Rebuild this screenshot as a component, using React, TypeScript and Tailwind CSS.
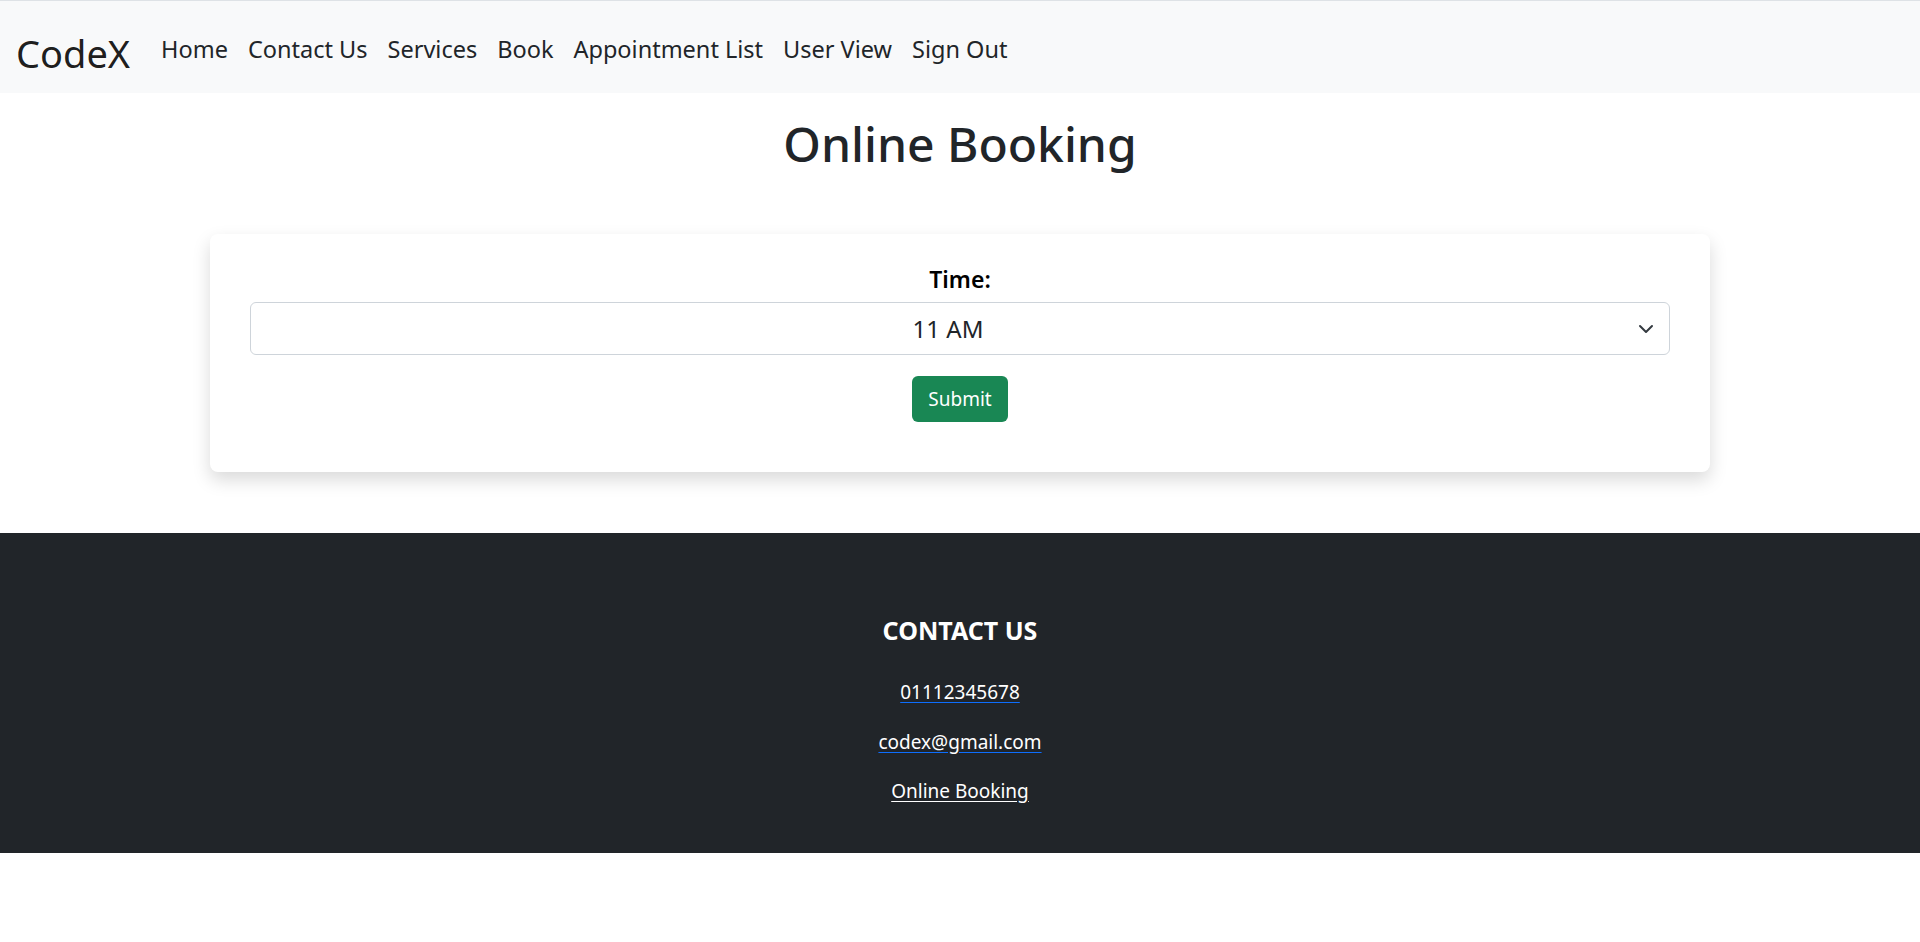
import { useState } from "react";

/* ─── Nav links ──────────────────────────────────────────────────────────── */
const LINKS = ["Home", "Contact Us", "Services", "Book", "Appointment List", "User View", "Sign Out"];

const TIMES = ["9 AM", "10 AM", "11 AM", "12 PM", "1 PM", "2 PM", "3 PM", "4 PM"];

/* ─── Component ──────────────────────────────────────────────────────────── */
export default function App() {
  const [time, setTime] = useState("11 AM");

  return (
    <div className="min-h-screen bg-white font-['Noto_Sans',sans-serif] text-[#212529]">
      {/* ── Navbar ─────────────────────────────────────────────── */}
      <nav className="h-[93px] border-t border-[#dee2e6] bg-[#f8f9fa] flex items-center pl-[16px] pt-[5px]">
        <a href="#" className="text-[38px] leading-none text-black/90 mr-[21px] pt-[6px]">
          CodeX
        </a>
        <ul className="flex items-center">
          {LINKS.map((l) => (
            <li key={l}>
              <a href="#" className="block px-[10px] text-[23.5px] text-[#212529]">
                {l}
              </a>
            </li>
          ))}
        </ul>
      </nav>

      {/* ── Title ──────────────────────────────────────────────── */}
      <h1 className="mt-[22px] text-center text-[48px] leading-[1.2] font-medium text-[#212529]">
        Online Booking
      </h1>

      {/* ── Booking card ───────────────────────────────────────── */}
      <div className="mt-[61px] mx-auto w-[1500px] rounded-lg bg-white shadow-[0_8px_18px_rgba(0,0,0,0.15)] px-[40px] pt-[28px] pb-[50px] flex flex-col items-center">
        <label htmlFor="time" className="text-[23px] leading-[1.5] font-semibold text-black">
          Time:
        </label>
        <div className="relative w-full mt-[6px]">
          <select
            id="time"
            value={time}
            onChange={(e) => setTime(e.target.value)}
            className="w-full h-[53px] appearance-none rounded-md border border-[#ced4da] bg-white pl-[12px] pr-[36px] text-[24px] text-[#212529] text-center [text-align-last:center] outline-none font-['Noto_Sans',sans-serif]"
          >
            {TIMES.map((t) => (
              <option key={t}>{t}</option>
            ))}
          </select>
          <svg
            className="pointer-events-none absolute right-[16px] top-1/2 -translate-y-1/2"
            width="16"
            height="14"
            viewBox="0 0 16 14"
            fill="none"
            stroke="#343a40"
            strokeWidth="2"
            strokeLinecap="round"
            strokeLinejoin="round"
          >
            <path d="m2 4 6 6 6-6" />
          </svg>
        </div>
        <button className="mt-[21px] h-[46px] px-[16px] rounded-md bg-[#198754] text-white text-[19px]">
          Submit
        </button>
      </div>

      {/* ── Footer ─────────────────────────────────────────────── */}
      <footer className="mt-[61px] h-[320px] bg-[#212529] text-white flex flex-col items-center pt-[82px]">
        <h5 className="text-[25px] leading-[1.2] font-bold">CONTACT US</h5>
        <div className="mt-[33px] flex flex-col items-center gap-[21px] text-[19px] leading-[1.5]">
          <a href="#" className="underline decoration-[#0d6efd] underline-offset-[3px]">
            01112345678
          </a>
          <a href="#" className="underline decoration-[#0d6efd] underline-offset-[3px]">
            codex@gmail.com
          </a>
          <a href="#" className="underline decoration-white underline-offset-[3px]">
            Online Booking
          </a>
        </div>
      </footer>
    </div>
  );
}
